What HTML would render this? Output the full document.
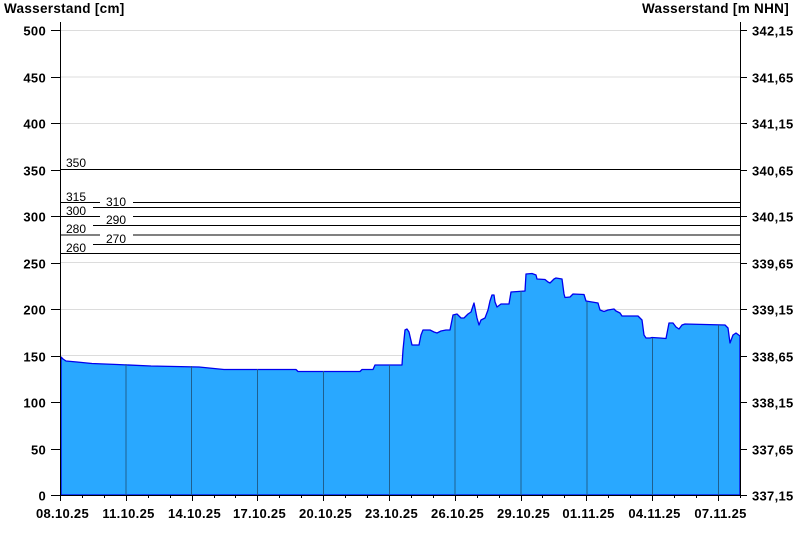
<!DOCTYPE html>
<html><head><meta charset="utf-8"><style>
html,body{margin:0;padding:0;background:#fff;width:800px;height:550px;overflow:hidden}
text{font-family:"Liberation Sans",Arial,sans-serif}
.b{font-weight:bold;font-size:13px;fill:#000;letter-spacing:0.3px}
.s{font-size:12px;fill:#000}
</style></head><body>
<svg width="800" height="550" viewBox="0 0 800 550" xmlns="http://www.w3.org/2000/svg">
<text class="b" x="4" y="13" style="font-size:13.5px">Wasserstand [cm]</text>
<text class="b" x="789" y="13" text-anchor="end" style="font-size:13.5px">Wasserstand [m NHN]</text>
<g stroke="#dcdcdc" stroke-width="1">
<line x1="61" x2="740" y1="30.5" y2="30.5"/><line x1="61" x2="740" y1="77" y2="77"/>
<line x1="61" x2="740" y1="123.5" y2="123.5"/><line x1="61" x2="740" y1="262.5" y2="262.5"/>
<line x1="61" x2="740" y1="309.5" y2="309.5"/><line x1="61" x2="740" y1="355.5" y2="355.5"/>
<line x1="61" x2="740" y1="402.5" y2="402.5"/><line x1="61" x2="740" y1="448.5" y2="448.5"/>
</g>
<polygon fill="#29a8ff" stroke="#0000ee" stroke-width="1.3" stroke-linejoin="round" points="
61,495 61,357 63,359 66,361 77,362 92,363.5 117,364.5 151,366 199,367 224,369.5 296,369.5 298,371.5 360,371.5 362,369.5 373,369.5 375,365 402,365 403,350 405,330 407,329 409,332 412,345 419,345 421,335 423,330 430,330 434,332 437,333 441,331 446,330 450,330 453,315 457,314 461,318 464,318 468,314 471,312 474,303 475,308 477,318 479,325 481,320 485,318 488,310 490,301 492,295 494,295 495,302 497,307 501,304 509,304 511,292 525,291 526,274 532,273.5 536,275 537,279 545,279.5 548,282 550,283 554,279 556,278 562,279 564,294 565,297.5 570,297 573,294 584,294.5 586,301 592,302 598,303 600,310 604,311.5 608,310 614,309 616,311 620,313 622,316 638,316 642,320 644,335 646,338 650,338 652,337.5 660,338 666,338.5 669,323 673,323 676,327 679,329 682,325 685,324 725,325 728,328 730,343 733,335 736,333 740,336 740,495"/>
<g stroke="#1f5f8f" stroke-width="1">
<line x1="126" x2="126" y1="364" y2="495"/><line x1="191.5" x2="191.5" y1="366" y2="495"/>
<line x1="257.5" x2="257.5" y1="369" y2="495"/><line x1="323.5" x2="323.5" y1="371" y2="495"/>
<line x1="389.5" x2="389.5" y1="365" y2="495"/><line x1="455" x2="455" y1="315" y2="495"/>
<line x1="521" x2="521" y1="291" y2="495"/><line x1="587" x2="587" y1="302" y2="495"/>
<line x1="652.5" x2="652.5" y1="338" y2="495"/><line x1="718.5" x2="718.5" y1="325" y2="495"/>
</g>
<g stroke="#000" stroke-width="1">
<line x1="61" x2="740" y1="169.5" y2="169.5"/>
<line x1="61" x2="100" y1="202.5" y2="202.5"/><line x1="133" x2="740" y1="202.5" y2="202.5"/>
<line x1="93" x2="740" y1="207.5" y2="207.5"/>
<line x1="61" x2="100" y1="216.5" y2="216.5"/><line x1="133" x2="740" y1="216.5" y2="216.5"/>
<line x1="93" x2="740" y1="225.5" y2="225.5"/>
<line x1="61" x2="100" y1="235" y2="235"/><line x1="133" x2="740" y1="235" y2="235"/>
<line x1="93" x2="740" y1="244.5" y2="244.5"/>
<line x1="61" x2="740" y1="253.5" y2="253.5"/>
</g>
<g class="s">
<text x="66" y="167">350</text><text x="66" y="201">315</text><text x="106" y="206">310</text>
<text x="66" y="215">300</text><text x="106" y="224">290</text><text x="66" y="233">280</text>
<text x="106" y="243">270</text><text x="66" y="252">260</text>
</g>
<g stroke="#000" stroke-width="1">
<line x1="60.5" x2="60.5" y1="22" y2="495.5"/><line x1="740.5" x2="740.5" y1="22" y2="495.5"/>
<line x1="60" x2="741" y1="495.5" y2="495.5"/>
</g>
<script>
var lv=[500,450,400,350,300,250,200,150,100,50,0],rv=['342,15','341,65','341,15','340,65','340,15','339,65','339,15','338,65','338,15','337,65','337,15'];
var NS='http://www.w3.org/2000/svg',svg=document.querySelector('svg');
function ln(a,b,c,d){var e=document.createElementNS(NS,'line');e.setAttribute('x1',a);e.setAttribute('x2',b);e.setAttribute('y1',c);e.setAttribute('y2',d);e.setAttribute('stroke','#000');svg.appendChild(e);}
function tx(x,y,t,a){var e=document.createElementNS(NS,'text');e.setAttribute('x',x);e.setAttribute('y',y);e.setAttribute('class','b');if(a)e.setAttribute('text-anchor',a);e.textContent=t;svg.appendChild(e);}
for(var i=0;i<11;i++){var y=Math.round(495-lv[i]*0.93)+0.5;ln(51,60,y,y);ln(741,747,y,y);tx(46,y+5,String(lv[i]),'end');tx(752,y+5,rv[i]);}
var d=['08.10.25','11.10.25','14.10.25','17.10.25','20.10.25','23.10.25','26.10.25','29.10.25','01.11.25','04.11.25','07.11.25'];
for(var n=0;n<=31;n++){var x=Math.round(60+n*21.93)+0.5;if(n%3==0){ln(x,x,495,501);tx(x+2,518,d[n/3],'middle');}else ln(x,x,495,498);}
</script>
</svg>
</body></html>
